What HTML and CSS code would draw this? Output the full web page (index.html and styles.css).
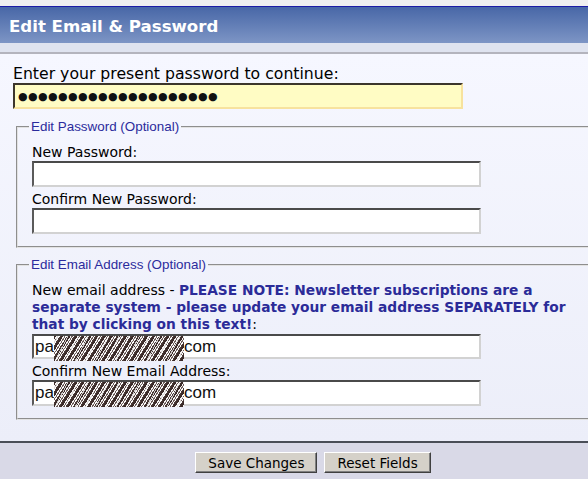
FILE: index.html
```html
<!DOCTYPE html>
<html lang="en">
<head>
<meta charset="utf-8">
<title>Edit Email &amp; Password</title>
<link rel="stylesheet" href="styles.css">
</head>
<body>
<div class="page">
  <div class="header"><h1 class="title">Edit Email &amp; Password</h1></div>
  <div class="strip"></div>
  <form class="content">
    <div class="lbl lbl-top">Enter your present password to continue:</div>
    <div class="field field-pw">●●●●●●●●●●●●●●●●●●●●</div>

    <fieldset class="group group-pw">
      <legend class="legend">Edit Password (Optional)</legend>
      <div class="lbl lbl-first">New Password:</div>
      <input class="field field-in" type="password">
      <div class="lbl lbl-next">Confirm New Password:</div>
      <input class="field field-in" type="password">
    </fieldset>

    <fieldset class="group group-mail">
      <legend class="legend">Edit Email Address (Optional)</legend>
      <div class="lbl lbl-note">New email address - <a class="note" href="#">PLEASE NOTE: Newsletter subscriptions are a<br>separate system - please update your email address SEPARATELY for<br>that by clicking on this text!</a>:</div>
      <div class="field field-mail field-mail-1">pa<span class="scribble"></span>com</div>
      <div class="lbl lbl-next">Confirm New Email Address:</div>
      <div class="field field-mail">pa<span class="scribble"></span>com</div>
    </fieldset>
  </form>
  <div class="footer">
    <button class="btn" type="button">Save Changes</button>
    <button class="btn" type="button">Reset Fields</button>
  </div>
</div>
</body>
</html>
```
FILE: styles.css
```css
html, body {
  margin: 0;
  padding: 0;
  overflow: hidden;
  background: #f0f0f0;
}

.page {
  width: 626px;
  margin-top: 6px;
  border-top: 1px solid #1c1ca6;
  font-family: "DejaVu Sans", Verdana, sans-serif;
  font-size: 14px;
  color: #000;
}

.header {
  height: 36px;
  background: linear-gradient(#4867a7, #7d95c5);
  display: flex;
  align-items: center;
}

.title {
  margin: 0 0 0 9px;
  font-size: 16.6px;
  line-height: 20px;
  font-weight: bold;
  color: #fff;
  padding-top: 3px;
}

.strip {
  height: 9px;
  background: #dfe3ef;
  border-bottom: 2px solid #b4b4bd;
}

.content {
  margin: 0;
  padding: 11px 0 21px 0;
  background: linear-gradient(#f6f7ff, #eceef9);
  border-bottom: 2px solid #4a4e57;
}

.lbl {
  line-height: 16px;
}

.lbl-top {
  margin-left: 13px;
  font-size: 15.7px;
  line-height: 17px;
}

.field {
  box-sizing: border-box;
  display: block;
  height: 26px;
  margin: 1px 0 0 0;
  padding: 0;
  border-style: solid;
  border-width: 2px;
  border-color: #4a4a4a #d2d2d2 #d2d2d2 #5a5a5a;
  background: #fff;
  font-family: "Liberation Sans", Arial, sans-serif;
  font-size: 17px;
  line-height: 22px;
}

.field-pw {
  width: 450px;
  margin-left: 13px;
  background: #fffcc4;
  border-color: #3c362c #f7e29e #f7e29e #3c362c;
  font-family: "DejaVu Sans", sans-serif;
  font-size: 11px;
  line-height: 24px;
  padding-left: 3px;
  letter-spacing: 0.4px;
  color: #111;
}

.field-in {
  width: 449px;
  font: inherit;
}

.field-mail {
  width: 449px;
  padding-left: 1px;
  color: #111;
  white-space: nowrap;
}

.field-mail-1 {
  height: 25px;
}

.scribble {
  display: inline-block;
  vertical-align: top;
  width: 130px;
  height: 25px;
  background:
    repeating-linear-gradient(118deg, rgba(255,255,255,0) 0 3px, rgba(255,255,255,0.75) 3px 4px, rgba(255,255,255,0) 4px 9px),
    repeating-linear-gradient(122deg, #3b2b29 0 2px, #f4f2f2 2px 3px, #6e5e5b 3px 4px, #fbfbfb 4px 5px, #4a3a37 5px 6px);
}

.group {
  box-sizing: border-box;
  width: 594px;
  margin: 0 0 0 16px;
  padding: 0 0 12px 14px;
  border: 2px groove #e2e2e2;
  min-width: 0;
}

.group-pw {
  margin-top: 10px;
}

.group-mail {
  margin-top: 9px;
}

.legend {
  padding: 0 2px;
  margin-left: -3px;
  font-family: "Liberation Sans", Tahoma, sans-serif;
  font-size: 13.4px;
  line-height: 16px;
  color: #2b2b9c;
}

.lbl-first {
  margin-top: 9px;
}

.lbl-next {
  margin-top: 4px;
}

.lbl-note {
  margin-top: 9px;
  line-height: 17px;
  white-space: nowrap;
}

.note {
  color: #2b2b98;
  font-weight: bold;
  font-size: 13.75px;
  text-decoration: none;
}

.footer {
  background: #d9d9e7;
  height: 28px;
  padding-top: 9px;
  display: flex;
  justify-content: center;
  align-items: flex-start;
  gap: 7px;
}

.btn {
  height: 21px;
  margin: 0;
  padding: 0 12px;
  background: #d5d1c9;
  border: 1px solid;
  border-color: #ffffff #404040 #404040 #ffffff;
  box-shadow: inset -1px -1px 0 #808080;
  font-family: "DejaVu Sans", Verdana, sans-serif;
  font-size: 13.5px;
  line-height: 18px;
  color: #000;
}
```
